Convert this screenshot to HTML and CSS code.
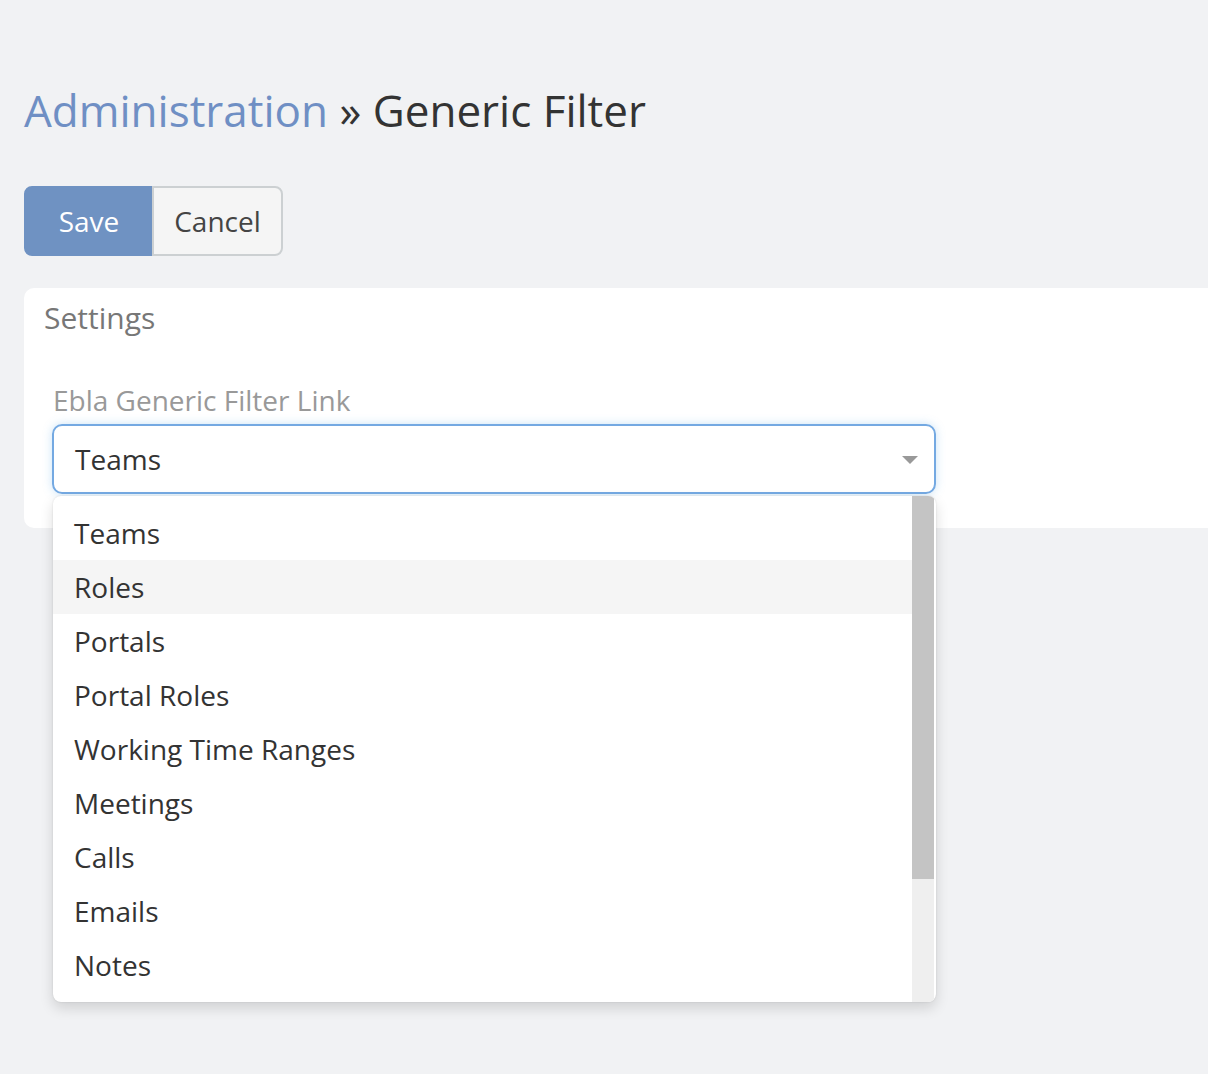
FILE: index.html
```html
<!DOCTYPE html>
<html lang="en">
<head>
<meta charset="utf-8">
<title>Generic Filter</title>
<link rel="stylesheet" href="styles.css">
</head>
<body>
<div class="page">
  <h1 class="title"><a class="crumb" href="#">Administration</a> <span class="sep">»</span> Generic Filter</h1>
  <div class="btn-group">
    <button class="btn btn-primary">Save</button>
    <button class="btn btn-default">Cancel</button>
  </div>
  <div class="panel">
    <div class="panel-heading">Settings</div>
    <div class="panel-body">
      <div class="field">
        <label class="field-label">Ebla Generic Filter Link</label>
        <div class="select">
          <span class="select-value">Teams</span>
          <span class="caret"></span>
        </div>
        <div class="dropdown">
          <ul class="options">
            <li>Teams</li>
            <li class="active">Roles</li>
            <li>Portals</li>
            <li>Portal Roles</li>
            <li>Working Time Ranges</li>
            <li>Meetings</li>
            <li>Calls</li>
            <li>Emails</li>
            <li>Notes</li>
          </ul>
          <div class="scrollbar"><div class="thumb"></div></div>
        </div>
      </div>
    </div>
  </div>
</div>
</body>
</html>
```

FILE: styles.css
```css
html, body {
  margin: 0;
  padding: 0;
  overflow: hidden;
}
body {
  background: #f1f2f4;
  font-family: "Open Sans", "Liberation Sans", sans-serif;
  color: #333;
  width: 1208px;
  height: 1074px;
}
.page {
  padding: 84px 0 0 24px;
}
.title {
  margin: 0;
  font-size: 44px;
  font-weight: 400;
  line-height: 52px;
  color: #333;
  white-space: nowrap;
}
.crumb {
  color: #6f8fc4;
  text-decoration: none;
}
.btn-group {
  display: flex;
  margin-top: 50px;
}
.btn {
  font-family: inherit;
  font-size: 28px;
  height: 70px;
  padding: 0;
  box-sizing: border-box;
  text-align: center;
  border: 2px solid transparent;
  cursor: pointer;
}
.btn-primary {
  background: #6f92c2;
  border-color: #6f92c2;
  color: #fff;
  border-radius: 8px 0 0 8px;
  width: 128px;
  padding-left: 2px;
}
.btn-default {
  background: #f5f5f5;
  border-color: #ccd0d2;
  color: #444;
  border-radius: 0 8px 8px 0;
  width: 131px;
}
.panel {
  margin-top: 32px;
  margin-right: -40px;
  background: #fff;
  border-radius: 10px;
  height: 240px;
}
.panel-heading {
  padding: 12px 20px 0;
  font-size: 30px;
  line-height: 36px;
  color: #777;
}
.panel-body {
  padding: 46px 28px 0;
}
.field {
  position: relative;
  width: 884px;
}
.field-label {
  display: block;
  font-size: 28px;
  line-height: 36px;
  color: #999;
  padding-left: 1px;
  margin-bottom: 6px;
}
.select {
  height: 70px;
  box-sizing: border-box;
  border: 2px solid #74a9e2;
  border-radius: 10px;
  box-shadow: 0 0 10px rgba(102, 175, 233, 0.35);
  display: flex;
  align-items: center;
  justify-content: space-between;
  padding: 0 16px 0 21px;
  font-size: 28px;
  color: #333;
}
.caret {
  width: 0;
  height: 0;
  border-left: 8px solid transparent;
  border-right: 8px solid transparent;
  border-top: 8px solid #999;
  margin-top: 2px;
}
.dropdown {
  position: absolute;
  left: 1px;
  top: 114px;
  width: 883px;
  height: 506px;
  background: #fff;
  border-radius: 8px;
  box-shadow: 0 6px 14px rgba(0, 0, 0, 0.14), 0 0 2px rgba(0, 0, 0, 0.12);
  display: flex;
  overflow: hidden;
}
.options {
  list-style: none;
  margin: 0;
  padding: 10px 0;
  flex: 1;
}
.options li {
  height: 54px;
  line-height: 54px;
  padding-left: 21px;
  font-size: 28px;
  color: #333;
}
.options li.active {
  background: #f5f5f5;
}
.scrollbar {
  width: 22px;
  margin-right: 2px;
  background: #efefef;
}
.thumb {
  height: 383px;
  background: #c4c4c4;
}
```
